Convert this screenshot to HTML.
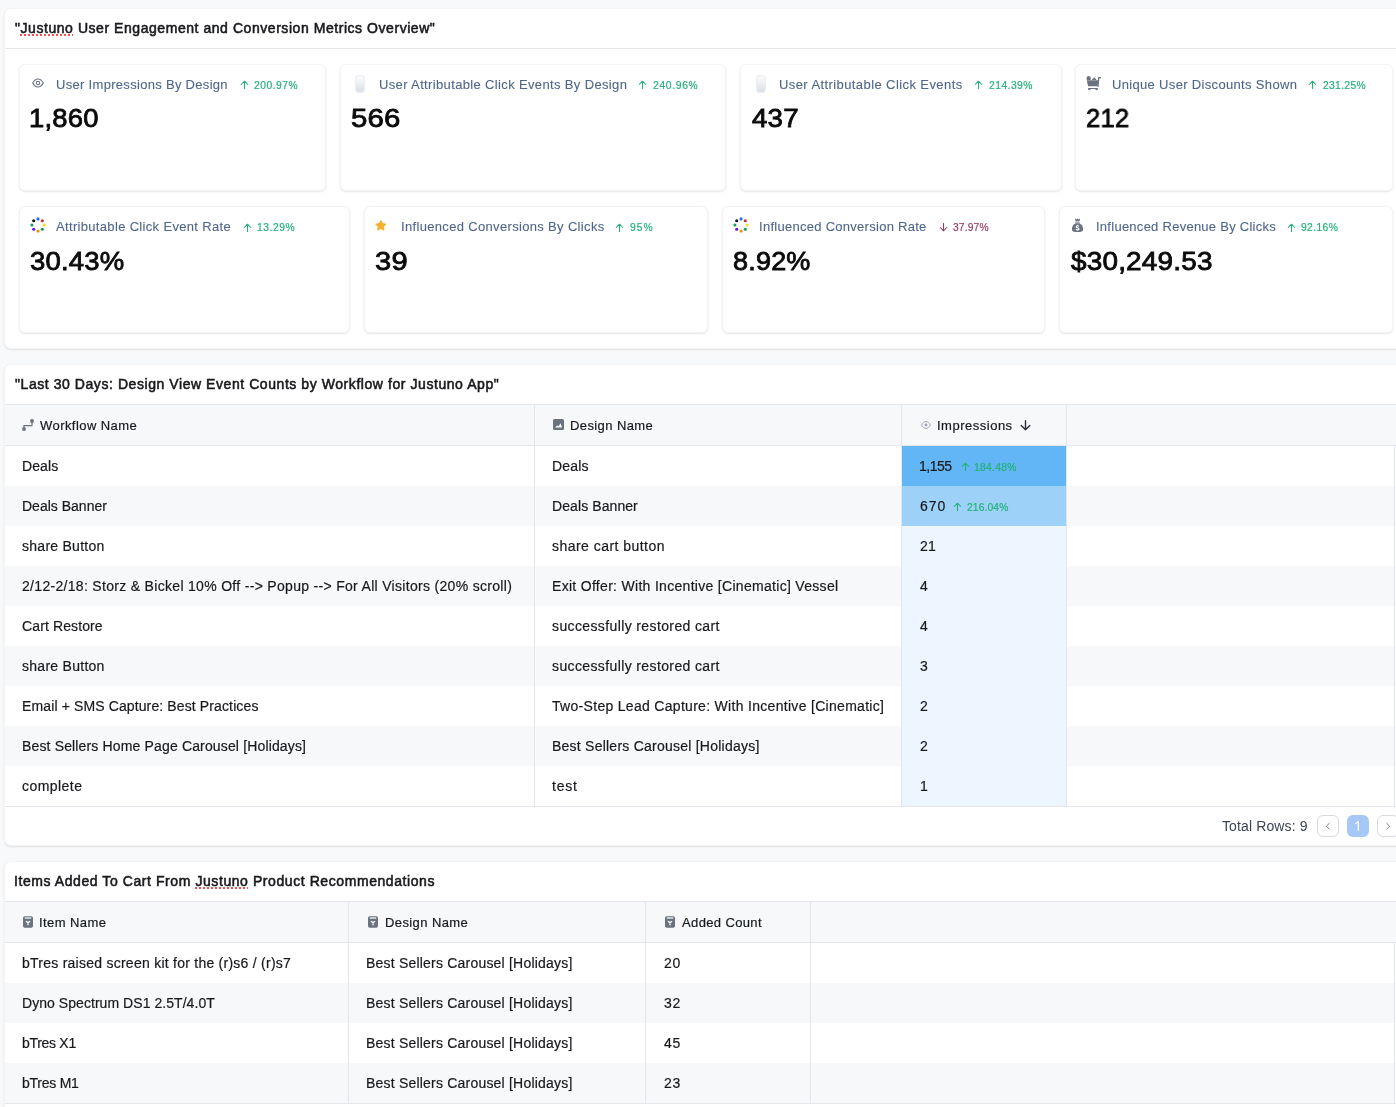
<!DOCTYPE html>
<html><head><meta charset="utf-8"><style>
*{box-sizing:border-box;margin:0;padding:0}
html,body{width:1396px;height:1107px;overflow:hidden;background:#f8f9fb;font-family:"Liberation Sans",sans-serif;color:#1f2328}
.b{position:absolute}
.t{position:absolute;white-space:nowrap;will-change:transform}
.ul{text-decoration:underline dotted #f65252;text-decoration-thickness:1.6px;text-underline-offset:0.5px}
</style></head><body>
<div class="b" style="left:4px;top:8px;width:1420px;height:341px;background:#fff;border:1px solid rgba(0,0,0,.045);border-radius:7px;box-shadow:0 1px 2px rgba(0,0,0,.1)"></div>
<div class="b" style="left:5px;top:48px;width:1420px;height:1px;background:#e4e6e9"></div>
<div class="t" id="t1" style="left:14.51px;top:19.05px;font-size:14px;line-height:18px;color:#18191c;letter-spacing:0.552px;-webkit-text-stroke:0.55px #18191c;">"<span class="ul">Justuno</span> User Engagement and Conversion Metrics Overview"</div>
<div class="b" style="left:19px;top:64px;width:307px;height:127px;background:#fff;border:1px solid rgba(0,0,0,.045);border-radius:6px;box-shadow:0 1px 2px rgba(0,0,0,.1)"></div>
<div class="t" id="kl0" style="left:56.02px;top:76.50px;font-size:13px;line-height:16px;color:#50668a;letter-spacing:0.304px;-webkit-text-stroke:0.1px #50668a;">User Impressions By Design</div>
<svg class="b" style="left:239.5px;top:80px" width="9" height="9" viewBox="0 0 9 9"><path d="M4.5 8.6V1.2M1.2 4.5L4.5 1.2L7.8 4.5" fill="none" stroke="#22b078" stroke-width="1.05" stroke-linecap="round" stroke-linejoin="round"/></svg>
<div class="t" id="kc0" style="left:253.96px;top:78.93px;font-size:10.3px;line-height:13px;color:#22b078;letter-spacing:0.506px;-webkit-text-stroke:0.18px #22b078;">200.97%</div>
<div class="t" id="kv0" style="left:28.74px;top:101.82px;font-size:26.5px;line-height:33px;color:#0b0b0c;letter-spacing:0.200px;-webkit-text-stroke:0.85px #0b0b0c;transform:scaleX(1.0337);transform-origin:0 0;">1,860</div>
<div class="b" style="left:340px;top:64px;width:386px;height:127px;background:#fff;border:1px solid rgba(0,0,0,.045);border-radius:6px;box-shadow:0 1px 2px rgba(0,0,0,.1)"></div>
<div class="t" id="kl1" style="left:379.12px;top:76.50px;font-size:13px;line-height:16px;color:#50668a;letter-spacing:0.354px;-webkit-text-stroke:0.1px #50668a;">User Attributable Click Events By Design</div>
<svg class="b" style="left:638px;top:80px" width="9" height="9" viewBox="0 0 9 9"><path d="M4.5 8.6V1.2M1.2 4.5L4.5 1.2L7.8 4.5" fill="none" stroke="#22b078" stroke-width="1.05" stroke-linecap="round" stroke-linejoin="round"/></svg>
<div class="t" id="kc1" style="left:653.16px;top:78.93px;font-size:10.3px;line-height:13px;color:#22b078;letter-spacing:0.672px;-webkit-text-stroke:0.18px #22b078;">240.96%</div>
<div class="t" id="kv1" style="left:350.65px;top:101.82px;font-size:26.5px;line-height:33px;color:#0b0b0c;letter-spacing:0.200px;-webkit-text-stroke:0.85px #0b0b0c;transform:scaleX(1.1070);transform-origin:0 0;">566</div>
<div class="b" style="left:740px;top:64px;width:322px;height:127px;background:#fff;border:1px solid rgba(0,0,0,.045);border-radius:6px;box-shadow:0 1px 2px rgba(0,0,0,.1)"></div>
<div class="t" id="kl2" style="left:778.62px;top:76.50px;font-size:13px;line-height:16px;color:#50668a;letter-spacing:0.411px;-webkit-text-stroke:0.1px #50668a;">User Attributable Click Events</div>
<svg class="b" style="left:974.3px;top:80px" width="9" height="9" viewBox="0 0 9 9"><path d="M4.5 8.6V1.2M1.2 4.5L4.5 1.2L7.8 4.5" fill="none" stroke="#22b078" stroke-width="1.05" stroke-linecap="round" stroke-linejoin="round"/></svg>
<div class="t" id="kc2" style="left:988.61px;top:78.93px;font-size:10.3px;line-height:13px;color:#22b078;letter-spacing:0.469px;-webkit-text-stroke:0.18px #22b078;">214.39%</div>
<div class="t" id="kv2" style="left:752.00px;top:101.82px;font-size:26.5px;line-height:33px;color:#0b0b0c;letter-spacing:0.200px;-webkit-text-stroke:0.85px #0b0b0c;transform:scaleX(1.0454);transform-origin:0 0;">437</div>
<div class="b" style="left:1075px;top:64px;width:318px;height:127px;background:#fff;border:1px solid rgba(0,0,0,.045);border-radius:6px;box-shadow:0 1px 2px rgba(0,0,0,.1)"></div>
<div class="t" id="kl3" style="left:1112.32px;top:76.50px;font-size:13px;line-height:16px;color:#50668a;letter-spacing:0.330px;-webkit-text-stroke:0.1px #50668a;">Unique User Discounts Shown</div>
<svg class="b" style="left:1308.2px;top:80px" width="9" height="9" viewBox="0 0 9 9"><path d="M4.5 8.6V1.2M1.2 4.5L4.5 1.2L7.8 4.5" fill="none" stroke="#22b078" stroke-width="1.05" stroke-linecap="round" stroke-linejoin="round"/></svg>
<div class="t" id="kc3" style="left:1322.57px;top:78.93px;font-size:10.3px;line-height:13px;color:#22b078;letter-spacing:0.333px;-webkit-text-stroke:0.18px #22b078;">231.25%</div>
<div class="t" id="kv3" style="left:1085.75px;top:101.82px;font-size:26.5px;line-height:33px;color:#0b0b0c;letter-spacing:0.200px;-webkit-text-stroke:0.85px #0b0b0c;transform:scaleX(0.9649);transform-origin:0 0;">212</div>
<div class="b" style="left:19px;top:206px;width:331px;height:127px;background:#fff;border:1px solid rgba(0,0,0,.045);border-radius:6px;box-shadow:0 1px 2px rgba(0,0,0,.1)"></div>
<div class="t" id="kl4" style="left:55.53px;top:219.00px;font-size:13px;line-height:16px;color:#50668a;letter-spacing:0.328px;-webkit-text-stroke:0.1px #50668a;">Attributable Click Event Rate</div>
<svg class="b" style="left:243.4px;top:222.5px" width="9" height="9" viewBox="0 0 9 9"><path d="M4.5 8.6V1.2M1.2 4.5L4.5 1.2L7.8 4.5" fill="none" stroke="#22b078" stroke-width="1.05" stroke-linecap="round" stroke-linejoin="round"/></svg>
<div class="t" id="kc4" style="left:257.06px;top:221.43px;font-size:10.3px;line-height:13px;color:#22b078;letter-spacing:0.548px;-webkit-text-stroke:0.18px #22b078;">13.29%</div>
<div class="t" id="kv4" style="left:30.28px;top:244.82px;font-size:26.5px;line-height:33px;color:#0b0b0c;letter-spacing:0.200px;-webkit-text-stroke:0.85px #0b0b0c;transform:scaleX(1.0369);transform-origin:0 0;">30.43%</div>
<div class="b" style="left:364px;top:206px;width:344px;height:127px;background:#fff;border:1px solid rgba(0,0,0,.045);border-radius:6px;box-shadow:0 1px 2px rgba(0,0,0,.1)"></div>
<div class="t" id="kl5" style="left:401.35px;top:219.00px;font-size:13px;line-height:16px;color:#50668a;letter-spacing:0.332px;-webkit-text-stroke:0.1px #50668a;">Influenced Conversions By Clicks</div>
<svg class="b" style="left:615.4px;top:222.5px" width="9" height="9" viewBox="0 0 9 9"><path d="M4.5 8.6V1.2M1.2 4.5L4.5 1.2L7.8 4.5" fill="none" stroke="#22b078" stroke-width="1.05" stroke-linecap="round" stroke-linejoin="round"/></svg>
<div class="t" id="kc5" style="left:629.65px;top:221.43px;font-size:10.3px;line-height:13px;color:#22b078;letter-spacing:0.983px;-webkit-text-stroke:0.18px #22b078;">95%</div>
<div class="t" id="kv5" style="left:374.60px;top:244.82px;font-size:26.5px;line-height:33px;color:#0b0b0c;letter-spacing:0.200px;-webkit-text-stroke:0.85px #0b0b0c;transform:scaleX(1.0977);transform-origin:0 0;">39</div>
<div class="b" style="left:722px;top:206px;width:323px;height:127px;background:#fff;border:1px solid rgba(0,0,0,.045);border-radius:6px;box-shadow:0 1px 2px rgba(0,0,0,.1)"></div>
<div class="t" id="kl6" style="left:758.95px;top:219.00px;font-size:13px;line-height:16px;color:#50668a;letter-spacing:0.276px;-webkit-text-stroke:0.1px #50668a;">Influenced Conversion Rate</div>
<svg class="b" style="left:939.3px;top:222.5px" width="9" height="9" viewBox="0 0 9 9"><path d="M4.5 0.4V7.8M1.2 4.5L4.5 7.8L7.8 4.5" fill="none" stroke="#973a5c" stroke-width="1.05" stroke-linecap="round" stroke-linejoin="round"/></svg>
<div class="t" id="kc6" style="left:952.50px;top:221.43px;font-size:10.3px;line-height:13px;color:#973a5c;letter-spacing:0.124px;-webkit-text-stroke:0.18px #973a5c;">37.97%</div>
<div class="t" id="kv6" style="left:732.74px;top:244.82px;font-size:26.5px;line-height:33px;color:#0b0b0c;letter-spacing:0.200px;-webkit-text-stroke:0.85px #0b0b0c;transform:scaleX(1.0187);transform-origin:0 0;">8.92%</div>
<div class="b" style="left:1059px;top:206px;width:334px;height:127px;background:#fff;border:1px solid rgba(0,0,0,.045);border-radius:6px;box-shadow:0 1px 2px rgba(0,0,0,.1)"></div>
<div class="t" id="kl7" style="left:1096.45px;top:219.00px;font-size:13px;line-height:16px;color:#50668a;letter-spacing:0.262px;-webkit-text-stroke:0.1px #50668a;">Influenced Revenue By Clicks</div>
<svg class="b" style="left:1287.2px;top:222.5px" width="9" height="9" viewBox="0 0 9 9"><path d="M4.5 8.6V1.2M1.2 4.5L4.5 1.2L7.8 4.5" fill="none" stroke="#22b078" stroke-width="1.05" stroke-linecap="round" stroke-linejoin="round"/></svg>
<div class="t" id="kc7" style="left:1300.62px;top:221.43px;font-size:10.3px;line-height:13px;color:#22b078;letter-spacing:0.378px;-webkit-text-stroke:0.18px #22b078;">92.16%</div>
<div class="t" id="kv7" style="left:1071.39px;top:244.82px;font-size:26.5px;line-height:33px;color:#0b0b0c;letter-spacing:0.200px;-webkit-text-stroke:0.85px #0b0b0c;transform:scaleX(1.0519);transform-origin:0 0;">$30,249.53</div>
<svg class="b" style="left:32px;top:78px" width="12" height="10" viewBox="0 0 12 10"><path d="M0.7 5C2.2 2.2 4 1 6 1S9.8 2.2 11.3 5C9.8 7.8 8 9 6 9S2.2 7.8 0.7 5Z" fill="none" stroke="#6b7280" stroke-width="1.1" stroke-linejoin="round"/><circle cx="6" cy="5" r="1.7" fill="none" stroke="#6b7280" stroke-width="1.1"/></svg>
<svg class="b" style="left:355px;top:75px" width="10" height="18" viewBox="0 0 10 18"><defs><linearGradient id="mg1" x1="0" y1="0" x2="0" y2="1"><stop offset="0" stop-color="#fdfdfe"/><stop offset="1" stop-color="#d9dee4"/></linearGradient></defs><rect x="0.6" y="0.6" width="8.8" height="16.8" rx="3" fill="url(#mg1)" stroke="#eceef1" stroke-width="1.1"/></svg>
<svg class="b" style="left:755.5px;top:75px" width="10" height="18" viewBox="0 0 10 18"><defs><linearGradient id="mg2" x1="0" y1="0" x2="0" y2="1"><stop offset="0" stop-color="#fdfdfe"/><stop offset="1" stop-color="#d9dee4"/></linearGradient></defs><rect x="0.6" y="0.6" width="8.8" height="16.8" rx="3" fill="url(#mg2)" stroke="#eceef1" stroke-width="1.1"/></svg>
<svg class="b" style="left:1086px;top:76px" width="15" height="15" viewBox="0 0 15 15"><g fill="#6b7280">
<path d="M0.6 2.2C0.6 0.9 1.6 0 2.6 0C3.7 0 4.7 0.9 4.7 2.2L4.5 4H0.8Z"/>
<path d="M5.8 4L8.2 1.2L10.6 4Z"/>
<path d="M0.7 4.3H12.3L11.5 10.2H2.1Z"/>
<path d="M12 10.4L12.8 1.6H15" fill="none" stroke="#6b7280" stroke-width="1.3" stroke-linecap="round"/>
<rect x="2.2" y="11.9" width="9.6" height="1.2" rx="0.6"/>
<circle cx="3.3" cy="13.1" r="1.2"/><circle cx="10.6" cy="13.1" r="1.2"/>
</g></svg>
<svg class="b" style="left:29.96px;top:216.9px" width="16" height="16" viewBox="0 0 16 16"><circle cx="8.00" cy="1.90" r="1.55" fill="#1a6ef5"/><circle cx="12.31" cy="3.69" r="1.55" fill="#d42a2a"/><circle cx="14.10" cy="8.00" r="1.55" fill="#f2e20f"/><circle cx="12.31" cy="12.31" r="1.55" fill="#0f9d58"/><circle cx="8.00" cy="14.10" r="1.55" fill="#ff8a00"/><circle cx="3.69" cy="12.31" r="1.55" fill="#5b16e8"/><circle cx="1.90" cy="8.00" r="1.55" fill="#0f9d58"/><circle cx="3.69" cy="3.69" r="1.55" fill="#111111"/></svg>
<svg class="b" style="left:732.5px;top:216.9px" width="16" height="16" viewBox="0 0 16 16"><circle cx="8.00" cy="1.90" r="1.55" fill="#1a6ef5"/><circle cx="12.31" cy="3.69" r="1.55" fill="#d42a2a"/><circle cx="14.10" cy="8.00" r="1.55" fill="#f2e20f"/><circle cx="12.31" cy="12.31" r="1.55" fill="#0f9d58"/><circle cx="8.00" cy="14.10" r="1.55" fill="#ff8a00"/><circle cx="3.69" cy="12.31" r="1.55" fill="#5b16e8"/><circle cx="1.90" cy="8.00" r="1.55" fill="#0f9d58"/><circle cx="3.69" cy="3.69" r="1.55" fill="#111111"/></svg>
<svg class="b" style="left:374.6px;top:219.9px" width="12" height="12" viewBox="0 0 12 12"><polygon points="5.80,0.40 7.42,3.58 10.94,4.13 8.42,6.65 8.97,10.17 5.80,8.55 2.63,10.17 3.18,6.65 0.66,4.13 4.18,3.58" fill="#f6b02e" stroke="#f6b02e" stroke-width="1" stroke-linejoin="round"/></svg>
<svg class="b" style="left:1072px;top:218px" width="11" height="15" viewBox="0 0 11 15"><g fill="#6b7280">
<path d="M3 0.3L4.4 1.6L5.5 0.3L6.6 1.6L8 0.3L7.6 3H3.4Z"/>
<rect x="3.3" y="3.6" width="4.4" height="1" />
<path d="M3.4 5.2H7.6C10 6.8 11.2 9 11.2 11C11.2 13.2 9.5 14 5.5 14S-0.2 13.2 -0.2 11C-0.2 9 1 6.8 3.4 5.2Z"/>
</g>
<path d="M7 8.3C6.6 7.8 6.1 7.7 5.5 7.7C4.7 7.7 4.2 8.1 4.2 8.7C4.2 10 7 9.4 7 10.9C7 11.5 6.4 11.9 5.5 11.9C4.8 11.9 4.3 11.7 3.9 11.2M5.5 6.8V7.7M5.5 11.9V12.8" fill="none" stroke="#fff" stroke-width="1.1"/></svg>
<div class="b" style="left:4px;top:364px;width:1420px;height:482px;background:#fff;border:1px solid rgba(0,0,0,.045);border-radius:7px;box-shadow:0 1px 2px rgba(0,0,0,.1)"></div>
<div class="b" style="left:5px;top:404px;width:1420px;height:1px;background:#e4e6e9"></div>
<div class="t" id="t2" style="left:15.41px;top:375.05px;font-size:14px;line-height:18px;color:#18191c;letter-spacing:0.563px;-webkit-text-stroke:0.55px #18191c;">"Last 30 Days: Design View Event Counts by Workflow for Justuno App"</div>
<div class="b" style="left:5px;top:405px;width:1420px;height:40px;background:#f7f8fa"></div>
<div class="b" style="left:5px;top:445px;width:1420px;height:1px;background:#e3e6ea"></div>
<div class="b" style="left:534px;top:405px;width:1px;height:40px;background:#e3e6ea"></div>
<div class="b" style="left:901px;top:405px;width:1px;height:40px;background:#e3e6ea"></div>
<div class="b" style="left:1066px;top:405px;width:1px;height:40px;background:#e3e6ea"></div>
<div class="b" style="left:902px;top:446px;width:164px;height:40px;background:#62b6f5"></div>
<div class="b" style="left:5px;top:486px;width:1420px;height:40px;background:#f7f8fa"></div>
<div class="b" style="left:902px;top:486px;width:164px;height:40px;background:#9dd1f8"></div>
<div class="b" style="left:902px;top:526px;width:164px;height:40px;background:#edf6fe"></div>
<div class="b" style="left:5px;top:566px;width:1420px;height:40px;background:#f7f8fa"></div>
<div class="b" style="left:902px;top:566px;width:164px;height:40px;background:#edf6fe"></div>
<div class="b" style="left:902px;top:606px;width:164px;height:40px;background:#edf6fe"></div>
<div class="b" style="left:5px;top:646px;width:1420px;height:40px;background:#f7f8fa"></div>
<div class="b" style="left:902px;top:646px;width:164px;height:40px;background:#edf6fe"></div>
<div class="b" style="left:902px;top:686px;width:164px;height:40px;background:#edf6fe"></div>
<div class="b" style="left:5px;top:726px;width:1420px;height:40px;background:#f7f8fa"></div>
<div class="b" style="left:902px;top:726px;width:164px;height:40px;background:#edf6fe"></div>
<div class="b" style="left:902px;top:766px;width:164px;height:40px;background:#edf6fe"></div>
<div class="b" style="left:534px;top:446px;width:1px;height:360px;background:#e3e6ea"></div>
<div class="b" style="left:901px;top:446px;width:1px;height:360px;background:#e3e6ea"></div>
<div class="b" style="left:1066px;top:446px;width:1px;height:360px;background:#e3e6ea"></div>
<div class="b" style="left:1394px;top:446px;width:1px;height:360px;background:#e3e6ea"></div>
<div class="t" id="r1a0" style="left:22.26px;top:457.15px;font-size:14px;line-height:18px;color:#18191c;letter-spacing:0.084px;-webkit-text-stroke:0.2px #18191c;">Deals</div>
<div class="t" id="r1b0" style="left:551.66px;top:457.15px;font-size:14px;line-height:18px;color:#18191c;letter-spacing:0.151px;-webkit-text-stroke:0.2px #18191c;">Deals</div>
<div class="t" id="r1c0" style="left:918.60px;top:457.15px;font-size:14px;line-height:18px;color:#18191c;letter-spacing:-0.520px;-webkit-text-stroke:0.2px #18191c;">1,155</div>
<svg class="b" style="left:960.9px;top:462px" width="9" height="9" viewBox="0 0 9 9"><path d="M4.5 8.6V1.2M1.2 4.5L4.5 1.2L7.8 4.5" fill="none" stroke="#22b078" stroke-width="1.05" stroke-linecap="round" stroke-linejoin="round"/></svg>
<div class="t" id="r1ch0" style="left:973.92px;top:460.93px;font-size:10.3px;line-height:13px;color:#22b078;letter-spacing:0.312px;-webkit-text-stroke:0.18px #22b078;">184.48%</div>
<div class="t" id="r1a1" style="left:22.26px;top:497.15px;font-size:14px;line-height:18px;color:#18191c;letter-spacing:0.007px;-webkit-text-stroke:0.2px #18191c;">Deals Banner</div>
<div class="t" id="r1b1" style="left:551.66px;top:497.15px;font-size:14px;line-height:18px;color:#18191c;letter-spacing:0.087px;-webkit-text-stroke:0.2px #18191c;">Deals Banner</div>
<div class="t" id="r1c1" style="left:919.70px;top:497.15px;font-size:14px;line-height:18px;color:#18191c;letter-spacing:0.915px;-webkit-text-stroke:0.2px #18191c;">670</div>
<svg class="b" style="left:952.5px;top:502px" width="9" height="9" viewBox="0 0 9 9"><path d="M4.5 8.6V1.2M1.2 4.5L4.5 1.2L7.8 4.5" fill="none" stroke="#22b078" stroke-width="1.05" stroke-linecap="round" stroke-linejoin="round"/></svg>
<div class="t" id="r1ch1" style="left:966.64px;top:500.93px;font-size:10.3px;line-height:13px;color:#22b078;letter-spacing:0.112px;-webkit-text-stroke:0.18px #22b078;">216.04%</div>
<div class="t" id="r1a2" style="left:22.26px;top:537.15px;font-size:14px;line-height:18px;color:#18191c;letter-spacing:0.268px;-webkit-text-stroke:0.2px #18191c;">share Button</div>
<div class="t" id="r1b2" style="left:551.66px;top:537.15px;font-size:14px;line-height:18px;color:#18191c;letter-spacing:0.460px;-webkit-text-stroke:0.2px #18191c;">share cart button</div>
<div class="t" id="r1c2" style="left:919.52px;top:537.15px;font-size:14px;line-height:18px;color:#18191c;letter-spacing:0.270px;-webkit-text-stroke:0.2px #18191c;">21</div>
<div class="t" id="r1a3" style="left:22.26px;top:577.15px;font-size:14px;line-height:18px;color:#18191c;letter-spacing:0.309px;-webkit-text-stroke:0.2px #18191c;">2/12-2/18: Storz &amp; Bickel 10% Off --&gt; Popup --&gt; For All Visitors (20% scroll)</div>
<div class="t" id="r1b3" style="left:551.66px;top:577.15px;font-size:14px;line-height:18px;color:#18191c;letter-spacing:0.301px;-webkit-text-stroke:0.2px #18191c;">Exit Offer: With Incentive [Cinematic] Vessel</div>
<div class="t" id="r1c3" style="left:919.52px;top:577.15px;font-size:14px;line-height:18px;color:#18191c;letter-spacing:0.270px;-webkit-text-stroke:0.2px #18191c;">4</div>
<div class="t" id="r1a4" style="left:22.26px;top:617.15px;font-size:14px;line-height:18px;color:#18191c;letter-spacing:0.118px;-webkit-text-stroke:0.2px #18191c;">Cart Restore</div>
<div class="t" id="r1b4" style="left:551.66px;top:617.15px;font-size:14px;line-height:18px;color:#18191c;letter-spacing:0.381px;-webkit-text-stroke:0.2px #18191c;">successfully restored cart</div>
<div class="t" id="r1c4" style="left:919.52px;top:617.15px;font-size:14px;line-height:18px;color:#18191c;letter-spacing:0.270px;-webkit-text-stroke:0.2px #18191c;">4</div>
<div class="t" id="r1a5" style="left:22.26px;top:657.15px;font-size:14px;line-height:18px;color:#18191c;letter-spacing:0.274px;-webkit-text-stroke:0.2px #18191c;">share Button</div>
<div class="t" id="r1b5" style="left:551.66px;top:657.15px;font-size:14px;line-height:18px;color:#18191c;letter-spacing:0.381px;-webkit-text-stroke:0.2px #18191c;">successfully restored cart</div>
<div class="t" id="r1c5" style="left:919.52px;top:657.15px;font-size:14px;line-height:18px;color:#18191c;letter-spacing:0.270px;-webkit-text-stroke:0.2px #18191c;">3</div>
<div class="t" id="r1a6" style="left:22.26px;top:697.15px;font-size:14px;line-height:18px;color:#18191c;letter-spacing:0.122px;-webkit-text-stroke:0.2px #18191c;">Email + SMS Capture: Best Practices</div>
<div class="t" id="r1b6" style="left:551.66px;top:697.15px;font-size:14px;line-height:18px;color:#18191c;letter-spacing:0.302px;-webkit-text-stroke:0.2px #18191c;">Two-Step Lead Capture: With Incentive [Cinematic]</div>
<div class="t" id="r1c6" style="left:919.52px;top:697.15px;font-size:14px;line-height:18px;color:#18191c;letter-spacing:0.270px;-webkit-text-stroke:0.2px #18191c;">2</div>
<div class="t" id="r1a7" style="left:22.26px;top:737.15px;font-size:14px;line-height:18px;color:#18191c;letter-spacing:0.151px;-webkit-text-stroke:0.2px #18191c;">Best Sellers Home Page Carousel [Holidays]</div>
<div class="t" id="r1b7" style="left:551.66px;top:737.15px;font-size:14px;line-height:18px;color:#18191c;letter-spacing:0.236px;-webkit-text-stroke:0.2px #18191c;">Best Sellers Carousel [Holidays]</div>
<div class="t" id="r1c7" style="left:919.52px;top:737.15px;font-size:14px;line-height:18px;color:#18191c;letter-spacing:0.270px;-webkit-text-stroke:0.2px #18191c;">2</div>
<div class="t" id="r1a8" style="left:22.26px;top:777.15px;font-size:14px;line-height:18px;color:#18191c;letter-spacing:0.456px;-webkit-text-stroke:0.2px #18191c;">complete</div>
<div class="t" id="r1b8" style="left:551.66px;top:777.15px;font-size:14px;line-height:18px;color:#18191c;letter-spacing:0.793px;-webkit-text-stroke:0.2px #18191c;">test</div>
<div class="t" id="r1c8" style="left:919.52px;top:777.15px;font-size:14px;line-height:18px;color:#18191c;letter-spacing:0.270px;-webkit-text-stroke:0.2px #18191c;">1</div>
<div class="b" style="left:5px;top:806px;width:1420px;height:1px;background:#e3e6ea"></div>
<div class="t" id="h1a" style="left:40.22px;top:417.70px;font-size:13px;line-height:16px;color:#16191d;letter-spacing:0.440px;-webkit-text-stroke:0.2px #16191d;">Workflow Name</div>
<div class="t" id="h1b" style="left:570.30px;top:417.70px;font-size:13px;line-height:16px;color:#16191d;letter-spacing:0.403px;-webkit-text-stroke:0.2px #16191d;">Design Name</div>
<div class="t" id="h1c" style="left:937.20px;top:417.70px;font-size:13px;line-height:16px;color:#16191d;letter-spacing:0.503px;-webkit-text-stroke:0.2px #16191d;">Impressions</div>
<svg class="b" style="left:22px;top:419px" width="12" height="12" viewBox="0 0 12 12"><g fill="#6b7280"><circle cx="10" cy="2" r="1.9"/><circle cx="2" cy="10" r="1.9"/></g><path d="M2 10V6.6H10V2" fill="none" stroke="#6b7280" stroke-width="1.1"/></svg>
<svg class="b" style="left:553px;top:419.3px" width="11" height="11" viewBox="0 0 11 11"><rect x="0" y="0" width="11" height="11" rx="1.6" fill="#6b7280"/><path d="M2 8.5L4.2 6.6L5.6 7.3L7.5 4.3L9 8.5Z" fill="#fff"/></svg>
<svg class="b" style="left:921px;top:421px" width="10" height="8" viewBox="0 0 10 8"><path d="M0.6 4C1.8 1.7 3.3 0.6 5 0.6S8.2 1.7 9.4 4C8.2 6.3 6.7 7.4 5 7.4S1.8 6.3 0.6 4Z" fill="none" stroke="#9ca3af" stroke-width="1"/><circle cx="5" cy="4" r="1.4" fill="#9ca3af"/></svg>
<svg class="b" style="left:1020px;top:419.5px" width="11" height="11" viewBox="0 0 11 11"><path d="M5.5 0.8V9.8M1.2 5.5L5.5 9.8L9.8 5.5" fill="none" stroke="#2b2f36" stroke-width="1.4" stroke-linecap="round" stroke-linejoin="round"/></svg>
<div class="t" id="tot" style="left:1221.72px;top:817.45px;font-size:14px;line-height:18px;color:#3d4451;letter-spacing:0.120px;">Total Rows: 9</div>
<div class="b" style="left:1317px;top:815px;width:22px;height:22px;background:#fff;border:1px solid #d7dadf;border-radius:6px"></div>
<svg class="b" style="left:1317px;top:815px" width="22" height="22" viewBox="0 0 22 22"><path d="M12.6 8L9.4 11.2L12.6 14.4" fill="none" stroke="#7b8088" stroke-width="1"/></svg>
<div class="b" style="left:1347px;top:815px;width:22px;height:22px;background:#a6c8f7;border-radius:6px"></div>
<svg class="b" style="left:1347px;top:815px" width="22" height="22" viewBox="0 0 22 22"><path d="M11.3 6.6V15.2M11.3 6.6L8.9 8.4" fill="none" stroke="#fff" stroke-width="1.25" stroke-linecap="round" stroke-linejoin="round"/></svg>
<div class="b" style="left:1377px;top:815px;width:22px;height:22px;background:#fff;border:1px solid #d7dadf;border-radius:6px"></div>
<svg class="b" style="left:1377px;top:815px" width="22" height="22" viewBox="0 0 22 22"><path d="M9.4 8L12.6 11.2L9.4 14.4" fill="none" stroke="#7b8088" stroke-width="1"/></svg>
<div class="b" style="left:4px;top:861px;width:1420px;height:300px;background:#fff;border:1px solid rgba(0,0,0,.045);border-radius:7px;box-shadow:0 1px 2px rgba(0,0,0,.1)"></div>
<div class="b" style="left:5px;top:901px;width:1420px;height:1px;background:#e4e6e9"></div>
<div class="t" id="t3" style="left:14.38px;top:871.95px;font-size:14px;line-height:18px;color:#18191c;letter-spacing:0.575px;-webkit-text-stroke:0.55px #18191c;">Items Added To Cart From <span class="ul">Justuno</span> Product Recommendations</div>
<div class="b" style="left:5px;top:902px;width:1420px;height:40px;background:#f7f8fa"></div>
<div class="b" style="left:5px;top:942px;width:1420px;height:1px;background:#e3e6ea"></div>
<div class="b" style="left:348px;top:902px;width:1px;height:40px;background:#e3e6ea"></div>
<div class="b" style="left:645px;top:902px;width:1px;height:40px;background:#e3e6ea"></div>
<div class="b" style="left:810px;top:902px;width:1px;height:40px;background:#e3e6ea"></div>
<div class="b" style="left:5px;top:983px;width:1420px;height:40px;background:#f7f8fa"></div>
<div class="b" style="left:5px;top:1063px;width:1420px;height:40px;background:#f7f8fa"></div>
<div class="b" style="left:348px;top:943px;width:1px;height:160px;background:#e3e6ea"></div>
<div class="b" style="left:645px;top:943px;width:1px;height:160px;background:#e3e6ea"></div>
<div class="b" style="left:810px;top:943px;width:1px;height:160px;background:#e3e6ea"></div>
<div class="b" style="left:1394px;top:943px;width:1px;height:160px;background:#e3e6ea"></div>
<div class="b" style="left:5px;top:1103px;width:1420px;height:1px;background:#e3e6ea"></div>
<div class="t" id="r3a0" style="left:22.26px;top:954.15px;font-size:14px;line-height:18px;color:#18191c;letter-spacing:0.252px;-webkit-text-stroke:0.2px #18191c;">bTres raised screen kit for the (r)s6 / (r)s7</div>
<div class="t" id="r3b0" style="left:365.66px;top:954.15px;font-size:14px;line-height:18px;color:#18191c;letter-spacing:0.205px;-webkit-text-stroke:0.2px #18191c;">Best Sellers Carousel [Holidays]</div>
<div class="t" id="r3c0" style="left:663.92px;top:954.15px;font-size:14px;line-height:18px;color:#18191c;letter-spacing:0.710px;-webkit-text-stroke:0.2px #18191c;">20</div>
<div class="t" id="r3a1" style="left:22.26px;top:994.15px;font-size:14px;line-height:18px;color:#18191c;letter-spacing:0.053px;-webkit-text-stroke:0.2px #18191c;">Dyno Spectrum DS1 2.5T/4.0T</div>
<div class="t" id="r3b1" style="left:365.66px;top:994.15px;font-size:14px;line-height:18px;color:#18191c;letter-spacing:0.205px;-webkit-text-stroke:0.2px #18191c;">Best Sellers Carousel [Holidays]</div>
<div class="t" id="r3c1" style="left:663.92px;top:994.15px;font-size:14px;line-height:18px;color:#18191c;letter-spacing:0.710px;-webkit-text-stroke:0.2px #18191c;">32</div>
<div class="t" id="r3a2" style="left:22.26px;top:1034.15px;font-size:14px;line-height:18px;color:#18191c;letter-spacing:-0.297px;-webkit-text-stroke:0.2px #18191c;">bTres X1</div>
<div class="t" id="r3b2" style="left:365.66px;top:1034.15px;font-size:14px;line-height:18px;color:#18191c;letter-spacing:0.205px;-webkit-text-stroke:0.2px #18191c;">Best Sellers Carousel [Holidays]</div>
<div class="t" id="r3c2" style="left:663.92px;top:1034.15px;font-size:14px;line-height:18px;color:#18191c;letter-spacing:0.710px;-webkit-text-stroke:0.2px #18191c;">45</div>
<div class="t" id="r3a3" style="left:22.26px;top:1074.15px;font-size:14px;line-height:18px;color:#18191c;letter-spacing:-0.250px;-webkit-text-stroke:0.2px #18191c;">bTres M1</div>
<div class="t" id="r3b3" style="left:365.66px;top:1074.15px;font-size:14px;line-height:18px;color:#18191c;letter-spacing:0.205px;-webkit-text-stroke:0.2px #18191c;">Best Sellers Carousel [Holidays]</div>
<div class="t" id="r3c3" style="left:663.92px;top:1074.15px;font-size:14px;line-height:18px;color:#18191c;letter-spacing:0.710px;-webkit-text-stroke:0.2px #18191c;">23</div>
<div class="t" id="h3a" style="left:39.10px;top:914.60px;font-size:13px;line-height:16px;color:#16191d;letter-spacing:0.416px;-webkit-text-stroke:0.2px #16191d;">Item Name</div>
<div class="t" id="h3b" style="left:384.50px;top:914.60px;font-size:13px;line-height:16px;color:#16191d;letter-spacing:0.400px;-webkit-text-stroke:0.2px #16191d;">Design Name</div>
<div class="t" id="h3c" style="left:681.80px;top:914.60px;font-size:13px;line-height:16px;color:#16191d;letter-spacing:0.364px;-webkit-text-stroke:0.2px #16191d;">Added Count</div>
<svg class="b" style="left:23px;top:916px" width="10" height="12" viewBox="0 0 10 12"><rect x="0" y="0.2" width="10" height="11.6" rx="1.8" fill="#6b7280"/><rect x="1.8" y="1.4" width="6.4" height="1.2" fill="#fff"/><path d="M2.9 5.2L5 6.6L7.1 5.2M5 6.6V9.3" fill="none" stroke="#fff" stroke-width="1.3"/></svg>
<svg class="b" style="left:368px;top:916px" width="10" height="12" viewBox="0 0 10 12"><rect x="0" y="0.2" width="10" height="11.6" rx="1.8" fill="#6b7280"/><rect x="1.8" y="1.4" width="6.4" height="1.2" fill="#fff"/><path d="M2.9 5.2L5 6.6L7.1 5.2M5 6.6V9.3" fill="none" stroke="#fff" stroke-width="1.3"/></svg>
<svg class="b" style="left:665px;top:916px" width="10" height="12" viewBox="0 0 10 12"><rect x="0" y="0.2" width="10" height="11.6" rx="1.8" fill="#6b7280"/><rect x="1.8" y="1.4" width="6.4" height="1.2" fill="#fff"/><path d="M2.9 5.2L5 6.6L7.1 5.2M5 6.6V9.3" fill="none" stroke="#fff" stroke-width="1.3"/></svg>
</body></html>
